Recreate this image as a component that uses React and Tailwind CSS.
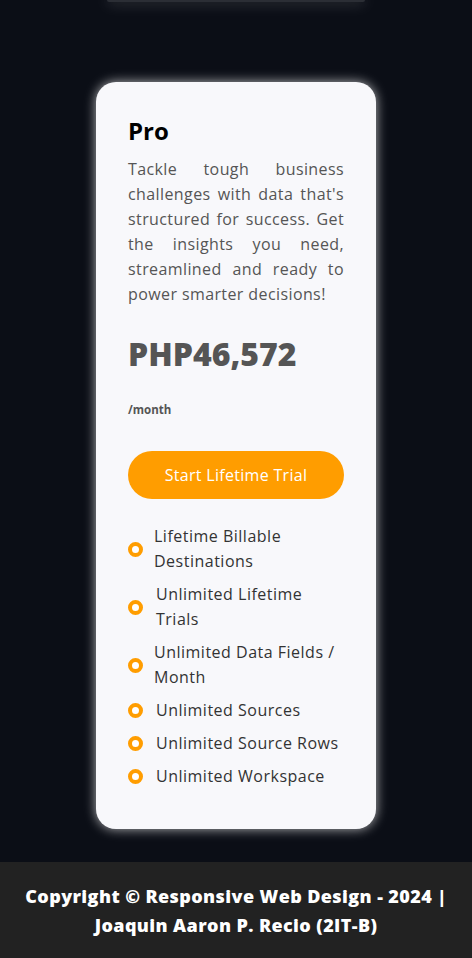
import { useState } from "react";

const features = [
  { text: "Lifetime Billable Destinations", pad: "pl-[11px]" },
  { text: "Unlimited Lifetime Trials", pad: "pl-[13px]" },
  { text: "Unlimited Data Fields / Month", pad: "pl-[11px]" },
  { text: "Unlimited Sources", pad: "pl-[13px]" },
  { text: "Unlimited Source Rows", pad: "pl-[13px]" },
  { text: "Unlimited Workspace", pad: "pl-[13px]" },
];

function Ring() {
  return <span className="block h-[15px] w-[15px] shrink-0 rounded-full border-[4px] border-[#ff9d00] bg-white" />;
}

export default function App() {
  const [plan] = useState("Pro");

  return (
    <div className="flex min-h-[958px] flex-col bg-[#0b0e16] font-['Open_Sans',sans-serif]">
      <main className="flex flex-1 flex-col items-center">
        {/* bottom edge of the previous card */}
        <div className="h-[2px] w-[258px] rounded-b-[10px] bg-[#2b2e35] shadow-[0_0_14px_rgba(255,255,255,0.55)]" />

        <div className="mt-[80px] mb-[33px] w-[280px] rounded-[20px] bg-[#f8f8fb] px-8 pt-[34px] pb-[40px] shadow-[0_0_12px_rgba(255,255,255,0.7)]">
          <h2 className="text-[24px] font-bold leading-[30px] text-black">{plan}</h2>
          <p className="mt-[11px] text-justify text-[16px] leading-[25px] tracking-[0.4px] text-[#555]">
            Tackle tough business challenges with data that's structured for success. Get the insights you need, streamlined and ready to power smarter decisions!
          </p>

          <p className="mt-[25px] text-[32px] font-extrabold leading-[44px] text-[#555]">PHP46,572</p>
          <p className="mt-[26px] text-[11.5px] font-bold leading-[16px] text-[#555]">/month</p>

          <button type="button" className="mt-[33px] flex h-[48px] w-full items-center justify-center rounded-full bg-[#ff9d00] text-[16px] tracking-[0.3px] text-white">
            Start Lifetime Trial
          </button>

          <ul className="mt-[25px] flex flex-col gap-2">
            {features.map((f) => (
              <li key={f.text} className="flex items-center">
                <Ring />
                <span className={`${f.pad} text-[16px] leading-[25px] tracking-[0.5px] text-[#333]`}>{f.text}</span>
              </li>
            ))}
          </ul>
        </div>
      </main>

      <footer className="flex h-[97px] flex-col items-center justify-center bg-[#222] px-4 text-center text-[18px] font-extrabold leading-[29px] tracking-[0.4px] text-white">
        <p>Copyright © Responsive Web Design - 2024 |</p>
        <p>Joaquin Aaron P. Recio (2IT-B)</p>
      </footer>
    </div>
  );
}
